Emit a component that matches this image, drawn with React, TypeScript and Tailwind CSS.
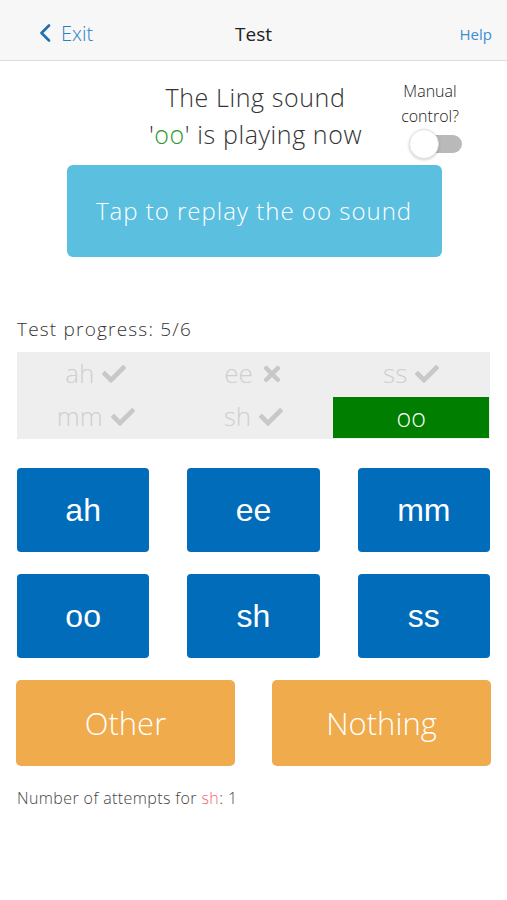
import React from 'react';
import { FaCheck, FaTimes } from 'react-icons/fa';

const progress = [
  { label: 'ah', ok: true },
  { label: 'ee', ok: false },
  { label: 'ss', ok: true },
  { label: 'mm', ok: true },
  { label: 'sh', ok: true },
];

const sounds = ['ah', 'ee', 'mm', 'oo', 'sh', 'ss'];

export default function App() {
  return (
    <div className="w-[507px] h-[900px] bg-white text-[#333] font-['Open_Sans',sans-serif]">
      {/* Nav bar */}
      <div className="h-[61px] pt-[8px] bg-[#f7f7f7] border-b border-[#dcdcdc] flex items-center justify-between px-[15px] relative">
        <div className="flex items-center gap-[10px] text-[#2b7fc4] text-[20px] font-light pl-[24px]">
          <svg width="12" height="18" viewBox="0 0 12 18" className="mt-[-2px]">
            <path d="M10 1.5 L2.5 9 L10 16.5" fill="none" stroke="#1f6fb5" strokeWidth="2.6" strokeLinecap="round" strokeLinejoin="round" />
          </svg>
          <span>Exit</span>
        </div>
        <span className="absolute left-0 right-0 text-center text-[19px] text-[#222] pointer-events-none">Test</span>
        <span className="text-[#3b8fd0] text-[15px] pr-0">Help</span>
      </div>

      {/* Status */}
      <div className="flex items-start pt-[18px]">
        <div className="flex-1 pl-[114px] text-center text-[25px] leading-[37px] tracking-[0.6px] text-[#333] font-light">
          <div>The Ling sound</div>
          <div>
            '<span className="text-[#2e9a2e]">oo</span>' is playing now
          </div>
        </div>
        <div className="w-[110px] flex flex-col items-center pr-[44px] text-[16px] leading-[25px] text-[#222] font-light">
          <span>Manual</span>
          <span>control?</span>
          <div className="relative w-[53px] h-[30px] ml-[10px]">
            <div className="absolute left-[10px] right-0 top-[6px] h-[18px] rounded-full bg-[#b9b9b9]" />
            <div className="absolute left-0 top-0 w-[30px] h-[30px] rounded-full bg-white border border-[#e2e2e2] shadow-[0_1px_3px_rgba(0,0,0,0.2)]" />
          </div>
        </div>
      </div>

      {/* Replay */}
      <div className="flex justify-center mt-[6px] pl-[1px]">
        <div className="w-[375px] h-[92px] rounded-[6px] bg-[#5bbfe0] flex items-center justify-center text-white text-[24px] tracking-[1px] font-light">
          Tap to replay the oo sound
        </div>
      </div>

      {/* Progress */}
      <div className="px-[17px] mt-[60px]">
        <div className="text-[19px] tracking-[1.2px] text-[#333] leading-[24px] font-light">Test progress: 5/6</div>
        <div className="mt-[11px] bg-[#eeeeee] grid grid-cols-3 h-[87px]">
          {progress.map((p) => (
            <div key={p.label} className="flex items-center justify-center gap-[8px] text-[26px] text-[#cfcfcf] font-light h-[43px]">
              <span>{p.label}</span>
              {p.ok ? <FaCheck className="text-[#c8c8c8] w-[24px] h-[24px]" /> : <FaTimes className="text-[#c8c8c8] w-[22px] h-[24px]" />}
            </div>
          ))}
          <div className="bg-[#007e00] border-[1px] border-[#eeeeee] flex items-center justify-center text-white text-[25px] font-light h-[43px] mt-[1px]">
            oo
          </div>
        </div>
      </div>

      {/* Sound buttons */}
      <div className="px-[17px] mt-[29px] grid grid-cols-3 gap-x-[38px] gap-y-[22px]">
        {sounds.map((s) => (
          <div key={s} className="h-[84px] rounded-[4px] bg-[#016cb9] flex items-center justify-center text-white text-[32px] font-['Liberation_Sans',Arial,sans-serif]">
            {s}
          </div>
        ))}
      </div>

      {/* Other / Nothing */}
      <div className="px-[16px] mt-[22px] grid grid-cols-2 gap-x-[37px]">
        <div className="h-[86px] rounded-[5px] bg-[#efab4c] flex items-center justify-center text-white text-[31px] font-light">
          Other
        </div>
        <div className="h-[86px] rounded-[5px] bg-[#efab4c] flex items-center justify-center text-white text-[31px] font-light">
          Nothing
        </div>
      </div>

      <div className="px-[17px] mt-[20px] text-[16px] tracking-[0.4px] text-[#444] font-light">
        Number of attempts for <span className="text-[#f0646e]">sh</span>: 1
      </div>
    </div>
  );
}
